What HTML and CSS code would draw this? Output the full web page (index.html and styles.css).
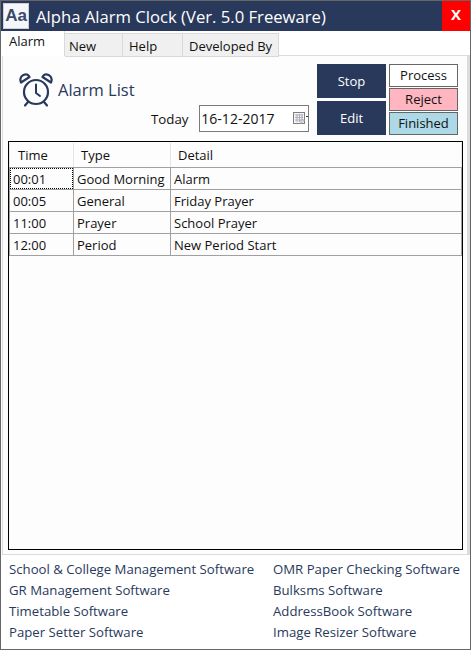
FILE: index.html
```html
<!DOCTYPE html>
<html lang="en">
<head>
<meta charset="utf-8">
<title>Alpha Alarm Clock</title>
<link rel="stylesheet" href="styles.css">
</head>
<body>
<div class="window">
  <header class="titlebar">
    <div class="logo">Aa</div>
    <div class="title">Alpha Alarm Clock (Ver. 5.0 Freeware)</div>
    <div class="close">X</div>
  </header>
  <nav class="tabs">
    <div class="tab active">Alarm</div>
    <div class="tab t-new">New</div>
    <div class="tab t-help">Help</div>
    <div class="tab t-dev">Developed By</div>
  </nav>
  <main class="panel">
    <section class="toolbar">
      <div class="heading">
        <svg class="clock" width="34" height="36" viewBox="0 0 34 36" fill="none" stroke="#29395b" stroke-width="2.2" stroke-linecap="round" stroke-linejoin="round">
          <circle cx="17" cy="20" r="12"/>
          <path d="M17 12.500v8.500l4 3" stroke-width="2"/>
          <path d="M2 10.500C0 6 3.500 1.500 8 2.500C9.500 3 10 4 10.500 5Z"/>
          <path d="M32 10.500C34 6 30.500 1.500 26 2.500C24.500 3 24 4 23.500 5Z"/>
          <path d="M9 30l-3 3.500M25 30l3 3.500"/>
        </svg>
        <span class="heading-text">Alarm List</span>
      </div>
      <div class="today">
        <span class="today-label">Today</span>
        <div class="date">
          <span>16-12-2017</span>
          <svg class="cal" width="12" height="12" viewBox="0 0 12 12">
            <rect x="0.500" y="0.500" width="11" height="11" fill="#f4f4f4" stroke="#857d78"/>
            <path d="M2 3h8M2 5.500h8M2 8h8M4 2v8M6.500 2v8M9 2v8" stroke="#aab0c0" stroke-width="1"/>
            <path d="M11.500 8L8 11.500V8Z" fill="#fff" stroke="#a8a8a8"/>
          </svg>
        </div>
      </div>
      <div class="actions">
        <button class="action">Stop</button>
        <button class="action">Edit</button>
      </div>
      <div class="legend">
        <div class="chip process">Process</div>
        <div class="chip reject">Reject</div>
        <div class="chip finished">Finished</div>
      </div>
    </section>
    <section class="grid">
      <table>
        <colgroup><col class="c1"><col class="c2"><col></colgroup>
        <thead>
          <tr><th>Time</th><th>Type</th><th>Detail</th></tr>
        </thead>
        <tbody>
          <tr><td><span class="focus">00:01</span></td><td>Good Morning</td><td>Alarm</td></tr>
          <tr><td>00:05</td><td>General</td><td>Friday Prayer</td></tr>
          <tr><td>11:00</td><td>Prayer</td><td>School Prayer</td></tr>
          <tr><td>12:00</td><td>Period</td><td>New Period Start</td></tr>
        </tbody>
      </table>
    </section>
  </main>
  <footer class="links">
    <div class="link-col first">
      <a>School &amp; College Management Software</a>
      <a>GR Management Software</a>
      <a>Timetable Software</a>
      <a>Paper Setter Software</a>
    </div>
    <div class="link-col">
      <a>OMR Paper Checking Software</a>
      <a>Bulksms Software</a>
      <a>AddressBook Software</a>
      <a>Image Resizer Software</a>
    </div>
  </footer>
</div>
</body>
</html>
```
FILE: styles.css
```css
* { box-sizing: border-box; }
html, body { margin: 0; padding: 0; }
body { width: 471px; height: 650px; overflow: hidden; font-family: "Open Sans", "Noto Sans", sans-serif; color: #111; }
.window { width: 471px; height: 650px; border: 1px solid #666; background: #fff; display: flex; flex-direction: column; }
.titlebar { height: 30px; background: #29395b; display: flex; align-items: center; flex: none; }
.logo { width: 26px; height: 26px; margin-left: 2px; background: #f4f6fa; border: 1px solid #c9cfdb; color: #3a4a6b; font-weight: 700; font-size: 17px; display: flex; align-items: center; justify-content: center; font-family: "Liberation Sans", sans-serif; }
.title { color: #fff; font-size: 16.660px; margin-left: 7px; flex: 1; white-space: nowrap; }
.close { width: 28px; height: 30px; background: #f00; color: #fff; font-weight: 700; font-size: 15px; line-height: 26px; display: flex; align-items: flex-start; justify-content: center; }
.tabs { height: 25px; display: flex; flex: none; font-size: 13px; position: relative; z-index: 1; margin-bottom: -1px; }
.tab { background: #f0f0f0; border: 1px solid #d9d9d9; margin-top: 2px; padding: 3px 0 0 6px; height: 24px; }
.tab.active { width: 64px; background: #fff; border: 0; border-right: 1px solid #d9d9d9; margin-top: 0; height: 25px; padding: 1px 0 0 8px; }
.t-new { width: 58px; border-left: 0; padding-left: 4px; }
.t-help { width: 60px; border-left: 0; padding-left: 6px; }
.t-dev { width: 96px; border-left: 0; padding-left: 6px; }
.panel { height: 500px; flex: none; margin-left: 1px; border: 1px solid #dcdcdc; border-right-width: 3px; display: flex; flex-direction: column; padding: 0 4px 0 5px; background: #fdfdfd; }
.toolbar { height: 85px; flex: none; display: flex; }
.heading { width: 141px; padding: 16px 0 0 11px; display: flex; align-items: flex-start; flex: none; }
.clock { flex: none; }
.heading-text { color: #29395b; font-size: 16.500px; margin: 6px 0 0 5px; white-space: nowrap; }
.today { width: 160px; flex: none; display: flex; align-items: flex-start; padding-top: 49px; }
.today-label { font-size: 13.300px; margin: 5px 0 0 2px; width: 49px; }
.date { width: 111px; height: 27px; border: 1px solid #7a7a7a; display: flex; align-items: center; justify-content: space-between; padding: 0 3px 0 1px; font-size: 14px; background: #fff; position: relative; }
.date::after { content: ""; position: absolute; right: 0; top: 10px; width: 2px; height: 1px; background: #29395b; }
.cal { margin-top: -2px; }
.actions { flex: none; margin-left: 8px; padding-top: 8px; display: flex; flex-direction: column; gap: 3px; }
.action { width: 69px; height: 34px; background: #29395b; color: #fff; border: 0; padding: 0; font: inherit; font-size: 13px; }
.legend { flex: none; margin-left: 3px; padding-top: 8px; display: flex; flex-direction: column; gap: 1px; }
.chip { width: 69px; height: 23px; border: 1px solid #666; font-size: 13px; text-align: center; line-height: 21px; }
.process { background: #fff; }
.reject { background: #ffb6c1; }
.finished { background: #add8e6; }
.grid { height: 409px; border: 1px solid #000; padding: 1px 0 0; background: #fdfdfd; flex: none; width: 455px; }
table { width: 100%; border-collapse: collapse; table-layout: fixed; font-size: 13px; }
.c1 { width: 64px; }
.c2 { width: 97px; }
th { height: 24px; font-weight: 400; text-align: left; padding: 1px 0 0 7px; border-left: 1px solid #e4e4e4; border-right: 1px solid #e4e4e4; border-bottom: 1px solid #a0a0a0; }
th:first-child { padding-left: 8px; }
td { height: 22px; padding: 1px 0 0 3px; border: 1px solid #a0a0a0; border-top: 0; white-space: nowrap; }
tbody td:first-child { position: relative; }
.focus::after { content: ""; position: absolute; inset: 0; border: 1px dotted #000; }
.links { flex: 1; display: flex; font-size: 13.200px; color: #29395b; padding: 4px 0 0 8px; }
.link-col { display: flex; flex-direction: column; }
.link-col.first { width: 264px; }
.link-col a { height: 21px; line-height: 21px; white-space: nowrap; }
```
